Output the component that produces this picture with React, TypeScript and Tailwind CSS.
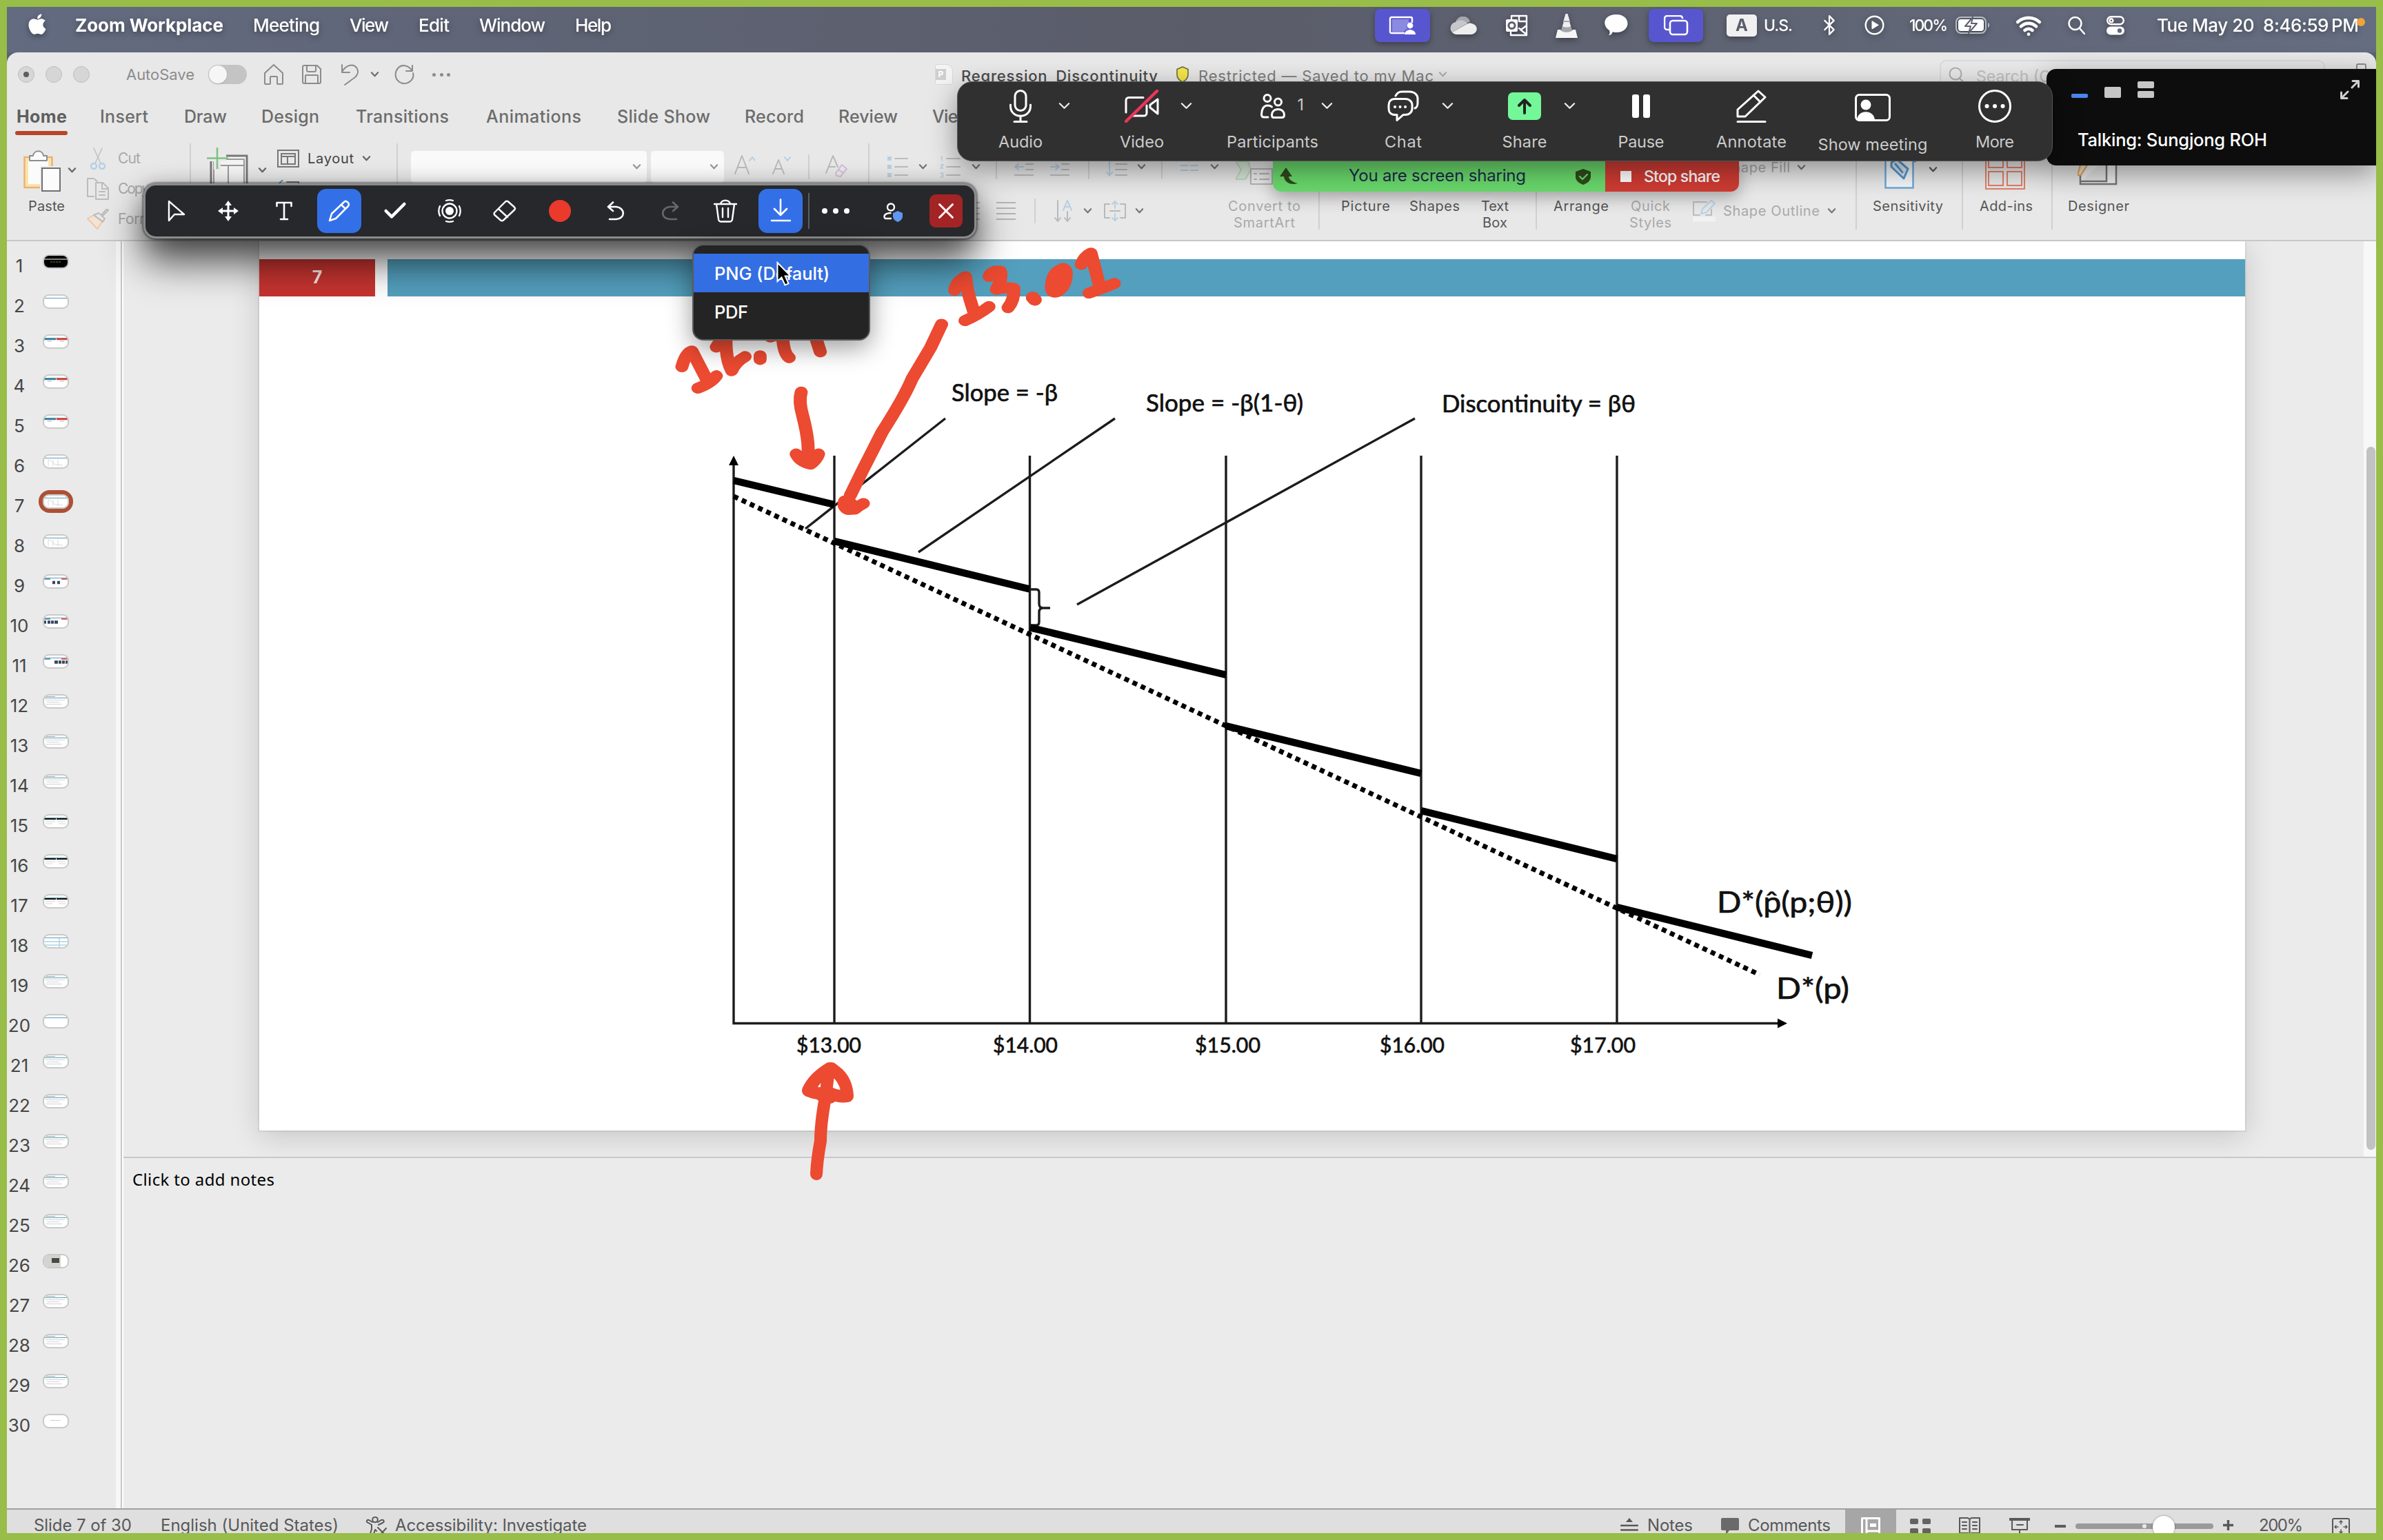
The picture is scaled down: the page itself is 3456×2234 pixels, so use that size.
import { useLayoutEffect, useRef, useState } from "react";
import type { ReactNode } from "react";
import { Bluetooth, Check, Scissors, Wifi, X } from "lucide-react";
import { FaApple } from "react-icons/fa";

/* Text whose tracking is tuned so that it fills its own box exactly. */
function Fit({ className = "", children }: { className?: string; children: string }) {
  const box = useRef<HTMLSpanElement>(null);
  const inner = useRef<HTMLSpanElement>(null);
  const [tracking, setTracking] = useState(0);
  useLayoutEffect(() => {
    if (!box.current || !inner.current) return;
    const natural = inner.current.getBoundingClientRect().width;
    setTracking((box.current.clientWidth - natural) / Math.max(1, children.length - 1));
  }, [children]);
  return (
    <span ref={box} className={`block shrink-0 whitespace-nowrap ${className}`}>
      <span ref={inner} style={{ letterSpacing: tracking }}>{children}</span>
    </span>
  );
}

function Ico({ vb, className = "", sw = 2, children }: { vb: string; className?: string; sw?: number; children: ReactNode }) {
  return (
    <svg viewBox={vb} className={`block shrink-0 ${className}`} fill="none" stroke="currentColor" strokeWidth={sw} strokeLinecap="round" strokeLinejoin="round">
      {children}
    </svg>
  );
}

function Chev({ className = "" }: { className?: string }) {
  return (
    <Ico vb="0 0 14 10" className={`h-[10px] w-[13px] ${className}`} sw={2.4}>
      <path d="M2 2l5 5.5L12 2" />
    </Ico>
  );
}

const Sep = ({ className = "" }: { className?: string }) => <div className={`w-[2px] shrink-0 bg-[#d0d0d0] ${className}`} />;

function MenuBar() {
  return (
    <div className="flex h-[66px] shrink-0 items-start bg-linear-to-r from-[#636b80] via-[#5a5c69] to-[#656d80] text-white">
      <div className="flex h-[53px] items-center text-[26px] leading-[34px] [filter:drop-shadow(0_3px_4px_rgba(0,0,0,0.35))]">
        <FaApple className="-mt-[4px] ml-[31px] h-[34px] w-[26px] shrink-0" />
        <Fit className="ml-[42px] w-[215px] font-bold">Zoom Workplace</Fit>
        <Fit className="ml-[43px] w-[97px] font-medium">Meeting</Fit>
        <Fit className="ml-[43px] w-[57px] font-medium">View</Fit>
        <Fit className="ml-[43px] w-[45px] font-medium">Edit</Fit>
        <Fit className="ml-[43px] w-[96px] font-medium">Window</Fit>
        <Fit className="ml-[43px] w-[53px] font-medium">Help</Fit>
        <div className="ml-[1107px] flex h-[48px] w-[80px] shrink-0 items-center justify-center rounded-[8px] bg-[#5856cf]">
          <Ico vb="0 0 40 28" className="h-[28px] w-[40px]" sw={2.4}>
            <path d="M22 25H4a2 2 0 0 1-2-2V4a2 2 0 0 1 2-2h28a2 2 0 0 1 2 2v5" />
            <path d="M5 5h24v5c-4 2-4 7-1 9-4 1-6 3-6 5H5z" fill="#8b8ae0" stroke="none" />
            <circle cx="31" cy="14" r="4.4" fill="white" stroke="none" />
            <path d="M23 27c0-9 16-9 16 0z" fill="white" stroke="none" />
          </Ico>
        </div>
        <Ico vb="0 0 40 26" className="ml-[28px] h-[26px] w-[40px]" sw={0}>
          <path d="M9 8a11 11 0 0 1 21-1l-10 6z" fill="#a5a7ae" />
          <path d="M9 8a9 9 0 0 0-5 15l22-13a12 12 0 0 0-17-2z" fill="#c6c7cb" />
          <path d="M4 23c2 2 4 3 7 3h20c11-1 12-14 1-16-3-1-5 0-7 1z" fill="#eeeeef" />
        </Ico>
        <Ico vb="0 0 33 32" className="ml-[41px] h-[32px] w-[33px]" sw={2.4}>
          <path d="M9 6V2h22v28H8v-4M20 2v8M20 10h11M20 20l3 2 8-6M31 29L22 22" />
          <rect x="1" y="7" width="17" height="18" rx="2" fill="white" stroke="none" />
          <circle cx="9.500" cy="16" r="4.600" stroke="#5b5d6b" strokeWidth="3" />
        </Ico>
        <Ico vb="0 0 32 36" className="ml-[40px] h-[36px] w-[32px]" sw={0}>
          <path d="M14.500 1h3l3.500 12H11z" fill="#eee" />
          <path d="M12 11h8l2 7H10z" fill="#a4a6ad" />
          <path d="M10 18h12l2 7c-3 4-13 4-16 0z" fill="#a4a6ad" />
          <path d="M12 13h8l2 6c-3 2-9 2-12 0z" fill="#eee" />
          <path d="M3 24h4c3 5 15 5 18 0h4l3 12H0z" fill="#f5f5f5" />
        </Ico>
        <Ico vb="0 0 34 31" className="ml-[39px] h-[31px] w-[34px]" sw={0}>
          <path d="M17 0c22 0 22 26 0 26-2 0-4 0-5-1-1 3-3 5-6 5 2-2 2-4 1-7C-4 16-2 0 17 0z" fill="white" />
        </Ico>
        <div className="ml-[30px] flex h-[48px] w-[79px] shrink-0 items-center justify-center rounded-[8px] bg-[#5856cf]">
          <Ico vb="0 0 36 30" className="h-[30px] w-[36px]" sw={2.6}>
            <path d="M8 21H5a4 4 0 0 1-4-4V5a4 4 0 0 1 4-4h18a4 4 0 0 1 4 3" />
            <rect x="9" y="8" width="25" height="20" rx="4" />
          </Ico>
        </div>
        <div className="ml-[34px] flex h-[32px] w-[44px] shrink-0 items-center justify-center rounded-[5px] bg-[#f0f0f0] text-[24px] font-bold text-[#5b5d6b]">A</div>
        <Fit className="ml-[10px] w-[42px] text-[23px] font-medium">U.S.</Fit>
        <Bluetooth className="-mr-[7px] ml-[37px] h-[33px] w-[32px] shrink-0" strokeWidth={1.7} />
        <Ico vb="0 0 29 29" className="ml-[42px] h-[29px] w-[29px]" sw={2.4}>
          <circle cx="14.500" cy="14.500" r="12.800" />
          <path d="M11 9v11l9-5.500z" fill="white" strokeWidth="1" />
        </Ico>
        <Fit className="ml-[36px] w-[56px] text-[23px] font-medium">100%</Fit>
        <Ico vb="0 0 50 25" className="ml-[11px] h-[25px] w-[50px]" sw={2}>
          <rect x="1" y="1" width="43" height="23" rx="7" stroke="#b9bbc2" />
          <rect x="4" y="4" width="37" height="17" rx="4" fill="white" stroke="none" />
          <path d="M47 9c3 1 3 6 0 7z" fill="#b9bbc2" stroke="none" />
          <path d="M25 1L14 14h8l-3 10 12-14h-8z" fill="white" stroke="#5e6070" strokeWidth="2" />
        </Ico>
        <Wifi className="-mr-[3px] ml-[36px] h-[38px] w-[40px] shrink-0" strokeWidth={2.9} />
        <Ico vb="0 0 25 27" className="ml-[40px] h-[27px] w-[25px]" sw={2.6}>
          <circle cx="10.500" cy="11" r="9" />
          <path d="M17 18l7 8" />
        </Ico>
        <Ico vb="0 0 26 28" className="ml-[31px] h-[28px] w-[26px]" sw={2.4}>
          <rect x="1.200" y="1.200" width="23.600" height="11" rx="5.500" />
          <circle cx="7" cy="6.700" r="2.400" />
          <rect x="0" y="15.500" width="26" height="12" rx="6" fill="white" stroke="none" />
          <circle cx="19" cy="21.500" r="3.200" fill="#636a7c" stroke="none" />
        </Ico>
        <Fit className="ml-[47px] w-[293px] font-medium">{"Tue May 20 \u00a08:46:59\u2009PM"}</Fit>
      </div>
    </div>
  );
}

function TitleBar() {
  return (
    <div className="flex h-[64px] shrink-0 items-center text-[22px] leading-[30px] text-[#8c8c8c]">
      <div className="ml-[16px] flex gap-[16px]">
        <div className="flex size-[24px] items-center justify-center rounded-full border border-[#bdbdbd] bg-[#d6d6d6]"><div className="size-[8px] rounded-full bg-[#5c5c5c]" /></div>
        <div className="size-[24px] rounded-full border border-[#bdbdbd] bg-[#d6d6d6]" />
        <div className="size-[24px] rounded-full border border-[#bdbdbd] bg-[#d6d6d6]" />
      </div>
      <Fit className="ml-[53px] w-[99px]">AutoSave</Fit>
      <div className="ml-[20px] h-[28px] w-[56px] shrink-0 rounded-full bg-[#c4c4c4] p-px"><div className="size-[26px] rounded-full bg-[#f6f6f6] shadow" /></div>
      <Ico vb="0 0 30 30" className="ml-[24px] h-[30px] w-[30px]"><path d="M2 13L15 1l13 12v15a1 1 0 0 1-1 1h-6a1 1 0 0 1-1-1v-9a1 1 0 0 0-1-1h-8a1 1 0 0 0-1 1v9a1 1 0 0 1-1 1H3a1 1 0 0 1-1-1z" /></Ico>
      <Ico vb="0 0 30 30" className="ml-[25px] h-[30px] w-[30px]"><path d="M4 2h19l5 5v19a2 2 0 0 1-2 2H4a2 2 0 0 1-2-2V4a2 2 0 0 1 2-2zM8 2v7a2 2 0 0 0 2 2h9a2 2 0 0 0 2-2V2M6 28V17a1 1 0 0 1 1-1h16a1 1 0 0 1 1 1v11" /></Ico>
      <Ico vb="0 0 27 32" className="ml-[27px] h-[32px] w-[27px]"><path d="M2 2v11h11M2 12C8 2 18 0 23 6c4 6 2 10-2 14L6 31" /></Ico>
      <Chev className="ml-[16px] mr-px text-[#6e6e6e]" />
      <Ico vb="0 0 29 30" className="ml-[21px] h-[30px] w-[29px]"><path d="M26 2v8h-9M25 9C20 1 10 0 5 6c-5 6-4 14 0 18 6 6 14 5 19 0 3-3 4-7 3-11" /></Ico>
      <div className="ml-[26px] flex w-[26px] justify-between"><i className="size-[5px] rounded-full bg-[#8c8c8c]" /><i className="size-[5px] rounded-full bg-[#8c8c8c]" /><i className="size-[5px] rounded-full bg-[#8c8c8c]" /></div>
      <div className="ml-[703px] flex h-[30px] w-[26px] shrink-0 items-center rounded-[3px] rounded-tr-[10px] border border-[#d8d8d8] bg-[#f4f4f4]"><span className="flex h-[16px] w-[15px] items-center justify-center bg-[#cfcfcf] text-[12px] font-bold text-white">P</span></div>
      <Fit className="mt-[4px] ml-[12px] w-[285px] font-medium text-[#4b4b4b]">Regression_Discontinuity</Fit>
      <Ico vb="0 0 20 24" className="ml-[26px] h-[24px] w-[20px]" sw={1.6}><path d="M10 1l8 3.500V12c0 6-4 9-8 11-4-2-8-5-8-11V4.500z" fill="#f5e84c" stroke="#6d6a45" /></Ico>
      <Fit className="mt-[3px] ml-[13px] w-[341px] text-[#7d7d7d]">Restricted — Saved to my Mac</Fit>
      <Chev className="ml-[7px] mr-px text-[#b0b0b0]" />
      <div className="mt-[11px] ml-[713px] flex h-[44px] w-[559px] shrink-0 items-start self-start rounded-[10px] border-2 border-[#dadada] pt-[7px] text-[#c0c0c0]">
        <Ico vb="0 0 24 24" className="mt-px ml-[11px] h-[24px] w-[24px] text-[#adadad]"><circle cx="10" cy="10" r="8.500" /><path d="M16 17l7 6" /></Ico>
        <span className="ml-[16px] text-[23px] leading-[30px]">Search (Cmd + Ctrl + U)</span>
      </div>
      <Ico vb="0 0 30 26" className="-mt-[6px] ml-[36px] h-[26px] w-[30px]"><path d="M10 14V3a2 2 0 0 1 2-2h9a2 2 0 0 1 2 2v12M1 10h6" /></Ico>
    </div>
  );
}

function TabRow() {
  return (
    <div className="flex h-[68px] shrink-0 items-start">
      <div className="flex h-[58px] items-center text-[25px] leading-[34px] font-medium text-[#6c6c6c]">
        <div className="relative ml-[14px] font-bold text-[#5e5e5e]">
          <Fit className="w-[73px]">Home</Fit>
          <div className="absolute top-[38px] -left-[2px] h-[6px] w-[76px] rounded-full bg-[#b7472a]" />
        </div>
        <Fit className="ml-[48px] w-[70px]">Insert</Fit>
        <Fit className="ml-[52px] w-[62px]">Draw</Fit>
        <Fit className="ml-[50px] w-[84px]">Design</Fit>
        <Fit className="ml-[53px] w-[135px]">Transitions</Fit>
        <Fit className="ml-[54px] w-[138px]">Animations</Fit>
        <Fit className="ml-[52px] w-[135px]">Slide Show</Fit>
        <Fit className="ml-[50px] w-[86px]">Record</Fit>
        <Fit className="ml-[50px] w-[86px]">Review</Fit>
        <Fit className="ml-[50px] w-[57px]">View</Fit>
      </div>
    </div>
  );
}

const Lines = ({ className = "" }: { className?: string }) => (
  <Ico vb="0 0 28 26" className={`h-[26px] w-[28px] text-[#b4b4b4] ${className}`} sw={2}><path d="M0 1h28M0 9h28M0 17h28M0 25h28" /></Ico>
);

function Ribbon() {
  return (
    <div className="flex h-[142px] shrink-0 items-start border-b-2 border-[#c8c8c8] text-[20px] leading-[24px] text-[#a8a8a8]">
      <div className="mt-[10px] ml-[24px] w-[54px] shrink-0">
        <Ico vb="0 0 54 60" className="h-[60px] w-[54px]" sw={2}>
          <rect x="1.500" y="10" width="40" height="44" fill="#fae3ae" stroke="#eab274" strokeWidth="2.500" strokeLinejoin="miter" />
          <rect x="7" y="14" width="29" height="35" fill="#fbfbfb" stroke="none" />
          <path d="M9 15V8h5c1-9 14-9 15 0h5v7z" fill="#fbfbfb" stroke="#8d8d8d" />
          <rect x="24" y="23" width="30" height="37" fill="#ececec" stroke="none" />
          <rect x="27" y="26" width="26" height="33" fill="#fcfcfc" stroke="#707070" strokeLinejoin="miter" />
        </Ico>
        <Fit className="mt-[9px] ml-[7px] w-[53px] text-[#555]">Paste</Fit>
      </div>
      <Chev className="mt-[34px] ml-[10px] text-[#666]" />
      <div className="ml-[15px] w-[80px] shrink-0 text-[21px]">
        <div className="flex h-[44px] items-center">
          <Ico vb="0 0 32 32" className="h-[32px] w-[32px] text-[#c3c3c3]" sw={1.6}>
            <path d="M10 1l10 22M22 1L12 23" />
            <ellipse cx="10" cy="27" rx="4" ry="4" stroke="#b4cfe6" strokeWidth="2.400" /><ellipse cx="22" cy="27" rx="4" ry="4" stroke="#b4cfe6" strokeWidth="2.400" />
          </Ico>
          <Fit className="ml-[13px] w-[33px]">Cut</Fit>
        </div>
        <div className="flex h-[44px] items-center"><Ico vb="0 0 32 32" className="h-[32px] w-[32px] text-[#bcbcbc]"><path d="M10 27H1V1h9l5 4M13 7h10l8 8v16H13zM22 7v9h9M18 20h8M18 25h8" /></Ico><Fit className="ml-[13px] w-[46px]">Copy</Fit></div>
        <div className="flex h-[44px] items-center"><Ico vb="0 0 32 30" className="h-[30px] w-[32px] text-[#bcbcbc]"><path d="M1 14l14 15 8-11L10 9z" fill="#f3e3d4" stroke="#ecc9a8" /><path d="M10 9l13 10 3-5-4-3 9-9-2-2-8 9-4-3z" /></Ico><Fit className="ml-[13px] w-[67px]">Format</Fit></div>
      </div>
      <Sep className="ml-[69px] h-[125px]" />
      <Ico vb="0 0 60 66" className="mt-[6px] ml-[23px] h-[66px] w-[60px]" sw={2}>
        <rect x="6" y="12" width="52" height="50" fill="#f4f4f4" stroke="#777" strokeWidth="3" strokeLinejoin="miter" />
        <path d="M10 17h44v41H10zM10 26h44M31 26v32" stroke="#999" />
        <path d="M0 8h28v12H20v12H10V20H0z" fill="#eaeaea" stroke="none" />
        <path d="M15 0v31M0 15.500h31" stroke="#7dc383" strokeWidth="2.500" strokeLinecap="butt" />
      </Ico>
      <Chev className="mt-[34px] ml-[14px] text-[#666]" />
      <div className="ml-[15px] w-[137px] shrink-0 text-[#444]">
        <div className="flex h-[44px] items-center">
          <Ico vb="0 0 32 26" className="h-[26px] w-[32px] text-[#777]"><path d="M1 1h30v24H1zM6 6h20v15H6zM6 10h20M15 10v11" strokeLinejoin="miter" /></Ico>
          <Fit className="ml-[12px] w-[67px]">Layout</Fit>
          <Chev className="ml-[12px] mr-px text-[#666]" />
        </div>
        <div className="flex h-[44px] items-center">
          <Ico vb="0 0 32 26" className="h-[26px] w-[32px] text-[#777]"><path d="M14 3h17v22H5V14" strokeLinejoin="miter" /><path d="M8 0L2 6l6 5M3 6h10" stroke="#5b9bd0" /></Ico>
          <span className="ml-[12px]">Reset</span>
        </div>
      </div>
      <Sep className="ml-[36px] h-[125px]" />
      <div className="mt-[11px] ml-[19px] flex h-[46px] w-[342px] shrink-0 items-center justify-end rounded-[5px] bg-[#fafafa] pr-[8px]"><Chev className="text-[#999]" /></div>
      <div className="mt-[11px] ml-[6px] flex h-[46px] w-[106px] shrink-0 items-center justify-end rounded-[5px] bg-[#fafafa] pr-[8px]"><Chev className="text-[#999]" /></div>
      <Ico vb="0 0 30 28" className="mt-[17px] ml-[15px] h-[28px] w-[30px] text-[#b9b9b9]"><path d="M1 27L11 1l10 26M5 18h12" /><path d="M22 8l4-5 4 5" stroke="#b3cde0" /></Ico>
      <Ico vb="0 0 27 28" className="mt-[17px] ml-[25px] h-[28px] w-[27px] text-[#b9b9b9]"><path d="M1 27L9 7l8 20M4 20h10" /><path d="M18 3l4 5 4-5" stroke="#b3cde0" /></Ico>
      <Sep className="mt-[16px] ml-[25px] h-[36px]" />
      <Ico vb="0 0 32 32" className="mt-[17px] ml-[23px] h-[32px] w-[32px] text-[#b9b9b9]"><path d="M1 26L11 1l7 16M5 17h9" /><path d="M15 26l9-12 7 6-9 11-6-1zM19 21l7 5" stroke="#d5bcd8" /></Ico>
      <Sep className="ml-[30px] h-[125px]" />
      <div className="ml-[26px] w-[481px] shrink-0">
        <div className="flex h-[68px] items-center">
          <Ico vb="0 0 30 30" className="h-[30px] w-[30px]"><path d="M0 3h6M0 15h6M0 27h6" stroke="#b8cfe2" strokeWidth="6" strokeLinecap="butt" /><path d="M11 3h19M11 15h19M11 27h19" stroke="#bdbdbd" /></Ico>
          <Chev className="ml-[15px] text-[#777]" />
          <Ico vb="0 0 30 32" className="ml-[18px] h-[32px] w-[30px]"><path d="M2 2l1-1v6M1 13h4l-4 5h4M1 25h4l-2 2 2 2-1 2H1" stroke="#b8cfe2" strokeWidth="1.500" /><path d="M10 4h20M10 16h20M10 28h20" stroke="#bdbdbd" /></Ico>
          <Chev className="ml-[16px] text-[#777]" />
          <Sep className="ml-[22px] h-[36px]" />
          <Ico vb="0 0 28 28" className="ml-[25px] h-[28px] w-[28px]"><path d="M2 14h11M6 10l-5 4 5 4" stroke="#b8cfe2" /><path d="M0 2h28M17 10h11M17 18h11M0 26h28" stroke="#bdbdbd" /></Ico>
          <Ico vb="0 0 28 28" className="ml-[24px] h-[28px] w-[28px]"><path d="M1 14h11M8 10l5 4-5 4" stroke="#b8cfe2" /><path d="M0 2h28M17 10h11M17 18h11M0 26h28" stroke="#bdbdbd" /></Ico>
          <Sep className="ml-[27px] h-[36px]" />
          <Ico vb="0 0 31 28" className="ml-[24px] h-[28px] w-[31px]"><path d="M5 0v26M1 22l4 5 4-5" stroke="#b8cfe2" /><path d="M14 2h17M14 10h17M14 18h17M14 26h17" stroke="#bdbdbd" /></Ico>
          <Chev className="ml-[14px] text-[#777]" />
          <Sep className="ml-[22px] h-[36px]" />
          <Ico vb="0 0 26 28" className="ml-[26px] h-[28px] w-[26px] text-[#b8cfe2]"><path d="M0 5h11M15 5h11M0 12h11M15 12h11M0 19h11M15 19h11" /></Ico>
          <Chev className="ml-[17px] text-[#777]" />
        </div>
        <div className="flex h-[60px] items-center">
          <Lines className="ml-[106px]" />
          <Lines className="ml-[24px]" />
          <Sep className="ml-[27px] h-[36px]" />
          <Ico vb="0 0 26 32" className="ml-[27px] h-[32px] w-[26px]"><path d="M5 1v29M1 26l4 5 4-5M19 17v13M15 26l4 5 4-5" stroke="#b9b9b9" /><path d="M13 15l6-14 6 14M15 10h8" stroke="#b8cfe2" /></Ico>
          <Chev className="ml-[16px] text-[#777]" />
          <Ico vb="0 0 32 30" className="ml-[17px] h-[30px] w-[32px]"><path d="M8 5H1v20h7M24 5h7v20h-7M9 15h14" stroke="#b9b9b9" /><path d="M16 1v10M12 5l4-4 4 4M16 19v10M12 25l4 4 4-4" stroke="#b8cfe2" /></Ico>
          <Chev className="ml-[13px] text-[#777]" />
        </div>
      </div>
      <div className="mt-[26px] ml-[13px] w-[105px] shrink-0">
        <Ico vb="0 0 54 34" className="ml-[11px] h-[34px] w-[54px]"><path d="M0 0h18l4 12-8 14H0l8-14z" stroke="#bcd8bd" fill="#d8e8d8" /><path d="M22 11h31v22H22zM27 18h3M35 18h13M27 26h3M35 26h13" stroke="#b4b4b4" fill="#ededed" /></Ico>
        <Fit className="mt-[19px] w-[105px]">Convert to</Fit>
        <Fit className="ml-[8px] w-[89px]">SmartArt</Fit>
      </div>
      <Sep className="ml-[26px] h-[125px]" />
      <Fit className="mt-[79px] ml-[31px] w-[71px] text-[#555]">Picture</Fit>
      <Fit className="mt-[79px] ml-[28px] w-[73px] text-[#555]">Shapes</Fit>
      <div className="mt-[79px] ml-[31px] w-[42px] shrink-0 text-[#555]"><Fit className="w-[40px]">Text</Fit><Fit className="ml-[2px] w-[36px]">Box</Fit></div>
      <Sep className="ml-[37px] h-[125px]" />
      <Fit className="mt-[79px] ml-[24px] w-[80px] text-[#555]">Arrange</Fit>
      <div className="mt-[79px] ml-[30px] w-[61px] shrink-0"><Fit className="ml-[2px] w-[57px]">Quick</Fit><Fit className="w-[61px]">Styles</Fit></div>
      <div className="ml-[31px] w-[209px] shrink-0">
        <div className="flex h-[70px] items-center"><Fit className="ml-[44px] w-[97px]">Shape Fill</Fit><Chev className="ml-[10px] text-[#777]" /></div>
        <div className="flex h-[56px] items-center">
          <Ico vb="0 0 33 32" className="h-[32px] w-[33px]"><path d="M20 3H1v19h9M27 14v8h-8" stroke="#bdbdbd" /><path d="M12 20l2-7L27 1l5 4-12 13z" stroke="#b8d3e8" /><path d="M0 28h33" stroke="#f2f2f2" strokeWidth="7" /></Ico>
          <Fit className="ml-[11px] w-[140px]">Shape Outline</Fit><Chev className="ml-[11px] text-[#777]" />
        </div>
      </div>
      <Sep className="ml-[27px] h-[125px]" />
      <div className="mt-[10px] ml-[23px] w-[102px] shrink-0 text-[#555]">
        <div className="flex h-[56px] items-center">
          <Ico vb="0 0 53 56" className="ml-[17px] h-[56px] w-[53px]">
            <path d="M1.500 6h40v48.500h-40z" fill="#f5f8fb" stroke="#6da6d6" strokeWidth="2.500" strokeLinejoin="miter" />
            <path d="M36 6l8 10 7-4-9-12z" fill="#5b97cb" stroke="#5b97cb" strokeWidth="3" />
            <path d="M10 18l8-5 16 14-6 14L10 24zM16 20l10 12" stroke="#5b97cb" strokeWidth="3" fill="#d9e8f4" />
          </Ico>
          <Chev className="ml-[11px]" />
        </div>
        <Fit className="mt-[13px] w-[102px]">Sensitivity</Fit>
      </div>
      <Sep className="ml-[27px] h-[125px]" />
      <div className="mt-[10px] ml-[24px] w-[77px] shrink-0 text-[#555]">
        <Ico vb="0 0 58 57" className="ml-[8px] h-[57px] w-[58px] text-[#e0806a]" sw={2}><path d="M1 1h56v55H1zM5 5h21v20H5zM32 5h21v20H32zM5 31h21v20H5zM32 31h21v20H32z" strokeLinejoin="miter" /></Ico>
        <Fit className="mt-[12px] w-[77px]">Add-ins</Fit>
      </div>
      <Sep className="ml-[27px] h-[125px]" />
      <div className="mt-[10px] ml-[22px] w-[89px] shrink-0 text-[#555]">
        <Ico vb="0 0 58 57" className="ml-[14px] h-[57px] w-[58px] text-[#777]"><path d="M4 10h52v39H4zM6 45h36V10" fill="#f2f2f2" strokeWidth="2.500" strokeLinejoin="miter" /><path d="M0 36l5-18 10 2-10 16z" stroke="#e4a55c" fill="#f7e2c2" /></Ico>
        <Fit className="mt-[12px] w-[89px]">Designer</Fit>
      </div>
    </div>
  );
}

type ThumbKind = "dark" | "plain" | "split" | "curve" | "pics" | "picsLeft" | "picsRight" | "text" | "black" | "table" | "photo" | "end";
const thumbs: ThumbKind[] = ["dark", "plain", "split", "split", "split", "curve", "curve", "curve", "pics", "picsLeft", "picsRight", "text", "text", "text", "black", "black", "black", "table", "text", "plain", "text", "text", "text", "text", "text", "photo", "text", "text", "text", "end"];

function ThumbArt({ kind }: { kind: ThumbKind }) {
  const pics = kind === "pics" || kind === "picsLeft" || kind === "picsRight";
  return (
    <svg viewBox="0 0 34 17" className="block h-[17px] w-[34px]" preserveAspectRatio="none">
      {kind === "dark" && <><rect width="34" height="17" fill="#000" /><path d="M0 5h34" stroke="#fff" /><path d="M9 9h15" stroke="#7a7a2c" strokeWidth="1.200" strokeDasharray="3 1" /></>}
      {kind !== "dark" && kind !== "end" && kind !== "photo" && <path d="M0 3.500h34" stroke="#5d9fb8" strokeWidth="1.200" />}
      {kind === "split" && <><path d="M0 5h17" stroke="#3f7f98" strokeWidth="2.400" /><path d="M18 5h16" stroke="#e2352a" strokeWidth="2.400" /><path d="M5 8h6M23 8h6" stroke="#bbb" /></>}
      {kind === "curve" && <path d="M6 6v9M6 6c6 0 6 8 14 7l7 1M13 6v9M20 6v9" stroke="#cfcfcf" strokeWidth="0.800" fill="none" />}
      {pics && <><path d="M0 5h9" stroke="#3f7f98" strokeWidth="1.600" /><path d="M25 5h9" stroke="#e2352a" strokeWidth="1.600" /></>}
      {kind === "pics" && <path d="M12 10h4M19 10h4" stroke="#3b4560" strokeWidth="4.500" />}
      {kind === "picsLeft" && <path d="M0 9.500h3M5 9.500h4M10 9.500h4M15 9.500h5" stroke="#3b4560" strokeWidth="4.500" />}
      {kind === "picsRight" && <path d="M15 9.500h5M21 9.500h4M26 9.500h4M31 9.500h3" stroke="#3b4560" strokeWidth="4.500" />}
      {kind === "text" && <><path d="M2 6.500h28M4 9.500h18M2 12.500h24" stroke="#d2d4d6" /><path d="M2 1.500h14" stroke="#a5a5a5" /></>}
      {kind === "black" && <><path d="M0 5h17M18 5h16" stroke="#111" strokeWidth="2" /><path d="M2 9h14M19 9h12M2 12h10M21 12h11" stroke="#d5d5d5" /></>}
      {kind === "table" && <><path d="M0 9h34M0 14h34M22 4v13" stroke="#a9d5e4" strokeWidth="1.400" /></>}
      {kind === "photo" && <><rect width="24" height="17" fill="#d3d3cf" /><rect x="11" y="4" width="11" height="7" fill="#4a4a42" /></>}
      {kind === "end" && <path d="M9 7.500h15" stroke="#cdcdcd" />}
    </svg>
  );
}

function Sidebar() {
  return (
    <div className="w-[158px] shrink-0 bg-[#eaeaea] pt-[7px]">
      {thumbs.map((kind, i) => (
        <div key={i} className="flex h-[58px] items-start">
          <span className="w-[36px] text-center text-[26px] leading-[58px] text-[#464646]">{i + 1}</span>
          <div className={i === 6 ? "mt-[12px] ml-[16px] rounded-[10px] ring-[6px] ring-[#ad5035]" : "mt-[12px] ml-[16px] rounded-[10px]"}>
            <div className="h-[21px] w-[38px] overflow-hidden rounded-[9px] border-2 border-[#c9c9c9] bg-white"><ThumbArt kind={kind} /></div>
          </div>
        </div>
      ))}
    </div>
  );
}

const verticals = [1210, 1493.5, 1778, 2061, 2345];
const segments = [[1064, 697, 1210, 732], [1210, 785, 1493, 854.5], [1494, 910.5, 1778, 979], [1778, 1053, 2061, 1122], [2061, 1176, 2345, 1246], [2345, 1316, 2628, 1386]];
const prices: [string, number, number][] = [["$13.00", 1155, 94], ["$14.00", 1440, 94], ["$15.00", 1733, 95], ["$16.00", 2001, 94], ["$17.00", 2277, 95]];

function Chart() {
  return (
    <svg viewBox="376 430 2880 1210" className="block h-[1210px] w-[2880px]" fill="none" stroke="#000">
      <g strokeWidth="3.400" stroke="#1c1c1c">
        <path d="M1064 670V1484.500H2578" />
        {verticals.map((x) => <path key={x} d={`M${x} 661V1484`} />)}
        <path d="M1371 607L1168 767M1617 607L1332 801M2052 607L1562 877" />
        <path d="M1495 855h8q4 0 4 5v16q0 6 6 6h10M1513 882q-6 0-6 6v14q0 5-4 5h-8" />
      </g>
      <path d="M1064 661l7 14h-14zM2592 1484.500l-14 7v-14z" fill="#000" stroke="none" />
      <g strokeWidth="10.500">{segments.map(([a, b, c, d]) => <path key={a} d={`M${a} ${b}L${c} ${d}`} />)}</g>
      <path d="M1064 720L2552 1414" strokeWidth="7" strokeDasharray="7 6.030" />
      <g fill="#111" stroke="#111" strokeWidth="0.700" fontSize="35" className="font-['Lato','Noto_Sans',sans-serif]">
        <text x="1380" y="582" textLength="154" lengthAdjust="spacingAndGlyphs">Slope = -β</text>
        <text x="1662" y="596.500" textLength="228" lengthAdjust="spacingAndGlyphs">Slope = -β(1-θ)</text>
        <text x="2091" y="598" textLength="281" lengthAdjust="spacingAndGlyphs">Discontinuity = βθ</text>
        <g fontSize="42">
          <text x="2490" y="1324" textLength="196" lengthAdjust="spacingAndGlyphs">D*(p̂(p;θ))</text>
          <text x="2576" y="1449" textLength="106" lengthAdjust="spacingAndGlyphs">D*(p)</text>
        </g>
        <g fontSize="31.500">{prices.map(([t, x, w]) => <text key={t} x={x} y="1527" textLength={w} lengthAdjust="spacingAndGlyphs">{t}</text>)}</g>
      </g>
    </svg>
  );
}

function Canvas() {
  return (
    <div className="flex h-[1328px] justify-between overflow-hidden bg-[#ebebeb]">
      <div className="ml-[197px] h-[1290px] w-[2880px] shrink-0 bg-white shadow-[0_8px_40px_rgba(0,0,0,0.16),0_0_0_2px_rgba(0,0,0,0.06)]">
        <div className="flex h-[80px] gap-[18px] pt-[26px]">
          <div className="flex w-[168px] items-center justify-center bg-[#c63430] text-[25px] font-bold text-white/90">7</div>
          <div className="flex-1 bg-[#539fbd]" />
        </div>
        <Chart />
      </div>
      <div className="flex w-[18px] justify-end bg-[#f7f7f7] pt-[298px] pr-[1px]">
        <div className="h-[1020px] w-[13px] rounded-full bg-[#c2c2c2]" />
      </div>
    </div>
  );
}

function StatusBar() {
  return (
    <div className="flex h-[60px] shrink-0 items-start border-t-2 border-[#a0a0a0] bg-[#dfdfdf] text-[#585858]">
      <div className="flex h-[45px] items-center text-[24px] leading-[32px]">
        <Fit className="ml-[39px] w-[142px]">Slide 7 of 30</Fit>
        <Fit className="ml-[42px] w-[258px]">English (United States)</Fit>
        <Ico vb="0 0 31 30" className="mt-[4px] ml-[40px] h-[30px] w-[31px]"><circle cx="13" cy="4.500" r="3.800" /><path d="M9 8L4 5C0 4 0 9 3 9l5 3v6L5 28M17 8l5-3c4-1 5 3 2 4l-6 3M11 25l2-6 2 2M17 16l12 12M29 17L18 29" /></Ico>
        <Fit className="ml-[11px] w-[278px]">Accessibility: Investigate</Fit>
        <Ico vb="0 0 26 28" className="mt-[6px] ml-[1499px] h-[28px] w-[26px]" sw={2.4}><path d="M8 6l5-6 5 6z" fill="currentColor" stroke="none" /><path d="M1 11h24M1 17.500h24M1 24h12" /></Ico>
        <Fit className="ml-[13px] w-[66px]">Notes</Fit>
        <Ico vb="0 0 26 26" className="mt-[5px] ml-[41px] h-[26px] w-[26px]" sw={0}><path d="M2 0h22a2 2 0 0 1 2 2v14a2 2 0 0 1-2 2H12l-5 7v-7H2a2 2 0 0 1-2-2V2a2 2 0 0 1 2-2z" fill="#6a6a6a" /></Ico>
        <Fit className="ml-[13px] w-[120px]">Comments</Fit>
        <div className="ml-[21px] flex h-[45px] w-[74px] shrink-0 items-center justify-center bg-[#a6a6a6]">
          <Ico vb="0 0 28 28" className="mt-[4px] h-[28px] w-[28px] text-white" sw={3}><path d="M1.500 1.500h25v25h-25zM8 2v24M8 20h18" /><rect x="13" y="9" width="9" height="5" fill="white" stroke="none" /></Ico>
        </div>
        <div className="mt-[2px] ml-[20px] grid grid-cols-2 gap-x-[6px] gap-y-[6px]"><i className="h-[8px] w-[12px] rounded-[2px] bg-[#636363]" /><i className="h-[8px] w-[12px] rounded-[2px] bg-[#636363]" /><i className="h-[8px] w-[12px] rounded-[2px] bg-[#636363]" /><i className="h-[8px] w-[12px] rounded-[2px] bg-[#636363]" /></div>
        <Ico vb="0 0 31 26" className="mt-[3px] ml-[41px] h-[26px] w-[31px]" sw={2}><path d="M1 1h12l2.500 2L18 1h12v22H18l-2.500 2-2.500-2H1zM15.500 3v21M5 7h6M5 12h6M5 17h6M20 7h6M20 12h6M20 17h6" /></Ico>
        <Ico vb="0 0 30 28" className="mt-[6px] ml-[42px] h-[28px] w-[30px]" sw={2}><path d="M1 2h28" strokeWidth="4" /><path d="M4 4v13h22V4M11 10h9M15 17v8M10 25h10" /></Ico>
        <div className="mt-[2px] ml-[36px] h-[4px] w-[16px] shrink-0 bg-[#5c5c5c]" />
        <div className="mt-[2px] ml-[14px] flex h-[8px] w-[200px] shrink-0 items-center rounded-full bg-[#9a9a9a]">
          <div className="ml-[97px] size-[6px] rounded-full bg-[#e8e8e8]" />
          <div className="mt-[2px] ml-[9px] size-[32px] shrink-0 rounded-full bg-white shadow-[0_0_3px_rgba(0,0,0,0.4)]" />
        </div>
        <Ico vb="0 0 17 17" className="ml-[13px] h-[17px] w-[17px]" sw={3.4}><path d="M8.500 1v15M1 8.500h15" strokeLinecap="butt" /></Ico>
        <Fit className="ml-[36px] w-[64px]">200%</Fit>
        <Ico vb="0 0 26 26" className="mt-[4px] ml-[42px] h-[26px] w-[26px]" sw={2}><rect x="1" y="1" width="24" height="24" rx="2" /><path d="M13 4v5M11 6l2-2 2 2M13 22v-5M11 20l2 2 2-2M4 13h5M6 11l-2 2 2 2M22 13h-5M20 11l2 2-2 2" strokeWidth="1.500" /></Ico>
      </div>
    </div>
  );
}

function Ctl({ className, label, labelClass = "", children }: { className: string; label: string; labelClass?: string; children: ReactNode }) {
  return (
    <div className={`flex shrink-0 flex-col items-center ${className}`}>
      <div className="relative flex h-[48px] items-center justify-center text-white">{children}</div>
      <Fit className={`mt-[12px] leading-[32px] ${labelClass}`}>{label}</Fit>
    </div>
  );
}

const Drop = ({ className = "" }: { className?: string }) => (
  <Ico vb="0 0 18 11" className={`mt-[18px] h-[11px] w-[17px] text-[#eee] ${className}`} sw={2.4}><path d="M2 2l7 7 7-7" /></Ico>
);

function MeetingToolbar() {
  return (
    <div className="absolute top-[118px] left-[1388px] flex h-[116px] w-[1589px] items-start rounded-[22px] border border-[#555] bg-[#303030] pt-[11px] text-[23.500px] text-[#cbcbcb] shadow-[0_12px_40px_rgba(0,0,0,0.4)]">
      <Ctl className="ml-[59px] w-[64px]" label="Audio" labelClass="w-[64px]">
        <Ico vb="0 0 32 48" className="h-[48px] w-[32px]" sw={3}><rect x="8" y="1.500" width="16" height="29" rx="8" /><path d="M1.500 22v2c0 19 29 19 29 0v-2M16 38v8M7 46.500h18" /></Ico>
      </Ctl>
      <Drop className="ml-[23px]" />
      <Ctl className="ml-[72px] w-[64px]" label="Video" labelClass="w-[64px]">
        <Ico vb="0 0 50 48" className="h-[48px] w-[50px]" sw={3}><path d="M27 11.500H6a4 4 0 0 0-4 4V33M32 23v11a4 4 0 0 1-4 4H12M48 14L37 22v4l11 9z" /><path d="M47 2L2 46" stroke="#f0345a" strokeWidth="4.500" /></Ico>
      </Ctl>
      <Drop className="ml-[24px]" />
      <Ctl className="ml-[50px] w-[133px]" label="Participants" labelClass="w-[133px]">
        <Ico vb="0 0 36 36" className="h-[36px] w-[36px]" sw={3}><circle cx="10" cy="6.500" r="5" /><circle cx="25.500" cy="12" r="5" /><path d="M11 34H5c-2 0-3.500-1-3.500-4 0-7 3-13 9-13 3 0 5 1 6 2M19 34.500h12c3 0 3.500-2 3.500-4 0-4-3-8-9-8s-9 4-9 8c0 2 0 4 2.500 4z" /></Ico>
        <span className="absolute top-[6px] left-[54px] text-[23px] leading-[32px] text-[#cbcbcb]">1</span>
      </Ctl>
      <Drop className="ml-[4px]" />
      <Ctl className="ml-[75px] w-[54px]" label="Chat" labelClass="w-[54px]">
        <Ico vb="0 0 46 46" className="h-[46px] w-[46px]" sw={3}><path d="M12 8c2-4 5-6 9-6h11c8 0 12 5 12 10v6c0 4-1 7-4 8" /><path d="M11 12.500h15c6 0 10 4 10 9v5c0 5-4 9-10 9h-3l-9 8v-8h-3c-6 0-9-4-9-9v-5c0-5 3-9 9-9z" /><path d="M11 24h.1M18.500 24h.1M26 24h.1" strokeWidth="4" /></Ico>
      </Ctl>
      <Drop className="ml-[29px]" />
      <Ctl className="ml-[70px] w-[66px]" label="Share" labelClass="w-[65px]">
        <div className="flex h-[40px] w-[48px] items-center justify-center rounded-[7px] bg-[#74f798]">
          <Ico vb="0 0 24 24" className="h-[24px] w-[24px] text-[#222]" sw={4}><path d="M12 22V4M4 11l8-8 8 8" /></Ico>
        </div>
      </Ctl>
      <Drop className="ml-[24px]" />
      <Ctl className="ml-[61px] w-[68px]" label="Pause" labelClass="w-[67px]">
        <div className="flex gap-[6px]"><i className="h-[34px] w-[10px] rounded-[3px] bg-white" /><i className="h-[34px] w-[10px] rounded-[3px] bg-white" /></div>
      </Ctl>
      <Ctl className="ml-[75px] w-[102px]" label="Annotate" labelClass="w-[102px]">
        <Ico vb="0 0 44 48" className="h-[48px] w-[44px]" sw={3}><path d="M2 39V29L32 2l10 9-29 28zM25 8l10 10M2 46.500h40" /></Ico>
      </Ctl>
      <Ctl className="ml-[45px] w-[160px]" label="Show meeting" labelClass="w-[159px] relative top-[4px]">
        <Ico vb="0 0 52 40" className="mt-[4px] h-[40px] w-[52px]" sw={3}><rect x="1.500" y="1.500" width="49" height="37" rx="5" /><ellipse cx="16" cy="16" rx="7.500" ry="7.500" fill="white" stroke="none" /><path d="M3 39c0-17 26-17 26 0z" fill="white" stroke="none" /></Ico>
      </Ctl>
      <Ctl className="ml-[69px] w-[56px]" label="More" labelClass="w-[56px]">
        <Ico vb="0 0 48 48" className="h-[48px] w-[48px]" sw={3}><circle cx="24" cy="24" r="22.500" /><path d="M12.500 24h.1M24 24h.1M35.500 24h.1" strokeWidth="6" /></Ico>
      </Ctl>
    </div>
  );
}

function ShareBanner() {
  return (
    <div className="absolute top-[232px] left-[1846px] flex h-[46px] w-[676px] overflow-hidden rounded-b-[12px] text-[24px] leading-[32px] shadow-[0_8px_24px_rgba(0,0,0,0.3)]">
      <div className="flex w-[482px] items-center bg-[#69d76b] text-[#1d2a4a]">
        <Ico vb="0 0 26 24" className="ml-[10px] h-[24px] w-[26px]" sw={0}><path d="M9 0l9 13h-5c0 4 5 8 13 10-10 3-19-1-20-10H0z" fill="#2f4a1b" /></Ico>
        <Fit className="-mt-px ml-[74px] w-[257px]">You are screen sharing</Fit>
        <Ico vb="0 0 22 23" className="mt-[2px] ml-[72px] h-[23px] w-[22px]" sw={2.4}><path d="M11 0l11 4v7c0 7-6 10-11 12C6 21 0 18 0 11V4z" fill="#2f4a1b" stroke="none" /><path d="M6 11l4 4 7-7" stroke="#69d76b" /></Ico>
      </div>
      <div className="flex flex-1 items-center bg-[#cd3b33] font-medium text-white">
        <div className="mt-[2px] ml-[22px] h-[16px] w-[16px] bg-white" />
        <Fit className="mt-[2px] ml-[18px] w-[111px] text-[23px]">Stop share</Fit>
      </div>
    </div>
  );
}

function SpeakerPanel() {
  return (
    <div className="absolute top-[100px] left-[2968px] flex h-[140px] w-[478px] flex-col rounded-l-[14px] bg-[#0d0d0d] shadow-[0_12px_40px_rgba(0,0,0,0.4)]">
      <div className="flex h-[48px] items-start">
        <div className="mt-[36px] ml-[36px] h-[6px] w-[24px] rounded-[2px] bg-[#4a86f0]" />
        <div className="mt-[26px] ml-[24px] h-[16px] w-[24px] rounded-[2px] bg-[#c6c6c6]" />
        <div className="mt-[18px] ml-[24px] flex w-[24px] flex-col gap-[4px]"><i className="h-[10px] rounded-[2px] bg-[#c6c6c6]" /><i className="h-[10px] rounded-[2px] bg-[#c6c6c6]" /></div>
        <Ico vb="0 0 28 28" className="mt-[16px] ml-[270px] h-[28px] w-[28px] text-[#cfcfcf]" sw={3}><path d="M17 11l9-9M18 1.500h8.500V10M11 17l-9 9M1.500 18v8.500H10" /></Ico>
      </div>
      <Fit className="mt-[38px] ml-[45px] w-[275px] text-[25.500px] leading-[34px] font-medium text-white">Talking: Sungjong ROH</Fit>
    </div>
  );
}

function Ink() {
  return (
    <svg viewBox="0 0 3456 2234" className="pointer-events-none absolute inset-0 h-[2234px] w-[3456px]" fill="none" stroke="#ec4a31" strokeLinecap="round" strokeLinejoin="round">
      <g transform="translate(940 341) scale(0.4847 0.4082)" strokeWidth="39">
        <path d="M917 196Q922 165 950 148Q952 180 962 225L975 275M948 304Q985 285 1020 254" />
        <path d="M1020 147Q1028 124 1054 129Q1060 155 1042 193Q1070 184 1094 190Q1096 230 1077 258" />
        <path d="M1151 222L1157 230" strokeWidth="42" />
        <path d="M1244 119Q1212 128 1208 170Q1202 208 1222 202Q1250 185 1251 138Q1252 122 1240 119" />
        <path d="M1296 104Q1305 76 1325 64L1352 186M1319 206Q1360 190 1395 172" />
        <path d="M878 317Q865 350 845 400L790 510Q765 580 700 700L640 840L605 925M588 945Q582 965 597 975L618 974Q630 962 644 954M600 945L612 960" />
        <path d="M101 468Q112 418 131 412L175 513M149 544Q190 525 204 500" />
        <path d="M204 398Q212 378 233 372Q232 440 250 482Q262 450 290 432" />
        <path d="M335 429L335 442" />
        <path d="M365 362Q395 350 403 372Q406 420 422 436M503 370L515 415" />
        <path d="M458 558Q450 590 462 640Q475 700 478 740L480 790M443 778Q455 806 486 814Q503 800 510 778M465 795L495 795M465 785L495 785" />
      </g>
      <path d="M1184 1703Q1185 1682 1190 1655Q1190 1630 1197 1592L1201 1560M1203 1550Q1180 1564 1172 1582Q1186 1588 1204 1586Q1218 1592 1229 1590Q1228 1570 1216 1558L1206 1550M1190 1588L1204 1592" strokeWidth="18" />
    </svg>
  );
}

function AnnotationToolbar() {
  return (
    <div className="absolute top-[266px] left-[208px] flex h-[80px] w-[1208px] items-center rounded-[18px] border-[3px] border-[#8b8b8b] bg-[#26282c] text-white shadow-[0_0_2px_2px_rgba(0,0,0,0.35),0_34px_56px_rgba(0,0,0,0.68),0_4px_30px_rgba(0,0,0,0.25)]">
      <Ico vb="0 0 26 32" className="ml-[32px] h-[32px] w-[26px]" sw={2.4}><path d="M2 2v28l8-9h14z" /></Ico>
      <Ico vb="0 0 30 30" className="ml-[47px] h-[30px] w-[30px]" sw={3}><path d="M15 4v22M4 15h22" /><path d="M15 0l5 7H10zM15 30l5-7H10zM0 15l7-5v10zM30 15l-7-5v10z" fill="white" stroke="none" /></Ico>
      <Ico vb="0 0 24 28" className="ml-[54px] h-[28px] w-[24px]" sw={2.6}><path d="M1.500 7V2h21v5M12 2v24M7 26h10" /></Ico>
      <div className="ml-[36px] flex h-[64px] w-[64px] shrink-0 items-center justify-center rounded-[13px] bg-[#3370e8]">
        <Ico vb="0 0 32 32" className="h-[32px] w-[32px]" sw={2.5}><path d="M2 30l3-10L23 3c3-3 9 2 6 6L11 27zM19 7l6 6" /></Ico>
      </div>
      <Check className="ml-[29px] h-[44px] w-[40px] shrink-0" strokeWidth={2.7} />
      <Ico vb="0 0 34 34" className="ml-[42px] h-[34px] w-[34px]" sw={2.3}><circle cx="17" cy="17" r="6" fill="white" stroke="none" /><circle cx="17" cy="17" r="10.500" /><path d="M12 2a16 16 0 0 1 10 0M12 32a16 16 0 0 0 10 0M3 10a16 16 0 0 0 0 14M31 10a16 16 0 0 1 0 14" /></Ico>
      <Ico vb="0 0 34 32" className="ml-[46px] h-[32px] w-[34px]" sw={2.4}><path d="M2.500 18L18 2.500q2-1.500 4 0l9 8q2 2 0 4L15 29.500q-2 1.500-4 0l-9-8q-1-2 .5-3.500zM8 13l13 12" /></Ico>
      <div className="ml-[47px] size-[32px] shrink-0 rounded-full bg-[#ea3a2c]" />
      <Ico vb="0 0 26 28" className="ml-[52px] h-[28px] w-[26px]" sw={2.6}><path d="M9 1.500L2 8l7 6M2 8h12c13 2 13 17 0 18H4" /></Ico>
      <Ico vb="0 0 26 28" className="ml-[53px] h-[28px] w-[26px] text-[#66686c]" sw={2.6}><path d="M17 1.500L24 8l-7 6M24 8H12c-13 2-13 17 0 18h10" /></Ico>
      <Ico vb="0 0 36 34" className="ml-[49px] h-[34px] w-[36px]" sw={2.4}><path d="M2 7h32M11 7c1-7 13-7 14 0M5 7l3 22c0 2 2 3.500 4 3.500h12c2 0 4-1.500 4-3.500l3-22M14 13v13M22 13v13" /></Ico>
      <div className="ml-[30px] flex h-[64px] w-[64px] shrink-0 items-center justify-center rounded-[13px] bg-[#3370e8]">
        <Ico vb="0 0 30 34" className="-mt-[3px] h-[34px] w-[30px]" sw={2.6}><path d="M15 1.500V23M6 15l9 9 9-9M2 32h27" /></Ico>
      </div>
      <div className="ml-[8px] h-[52px] w-[2px] shrink-0 bg-[#5c5e62]" />
      <div className="ml-[18px] flex w-[40px] shrink-0 justify-between"><i className="size-[8px] rounded-full bg-white" /><i className="size-[8px] rounded-full bg-white" /><i className="size-[8px] rounded-full bg-white" /></div>
      <Ico vb="0 0 28 28" className="mt-[3px] ml-[49px] h-[28px] w-[28px]" sw={2.4}><circle cx="11" cy="6.500" r="5" /><path d="M11 23H4c-2 0-2.500-1-2.500-3 0-3 4-5 9-5" /><path d="M21 12l7 3v5c0 4-4 7-7 8-3-1-7-4-7-8v-5z" fill="#5f97f2" stroke="none" /></Ico>
      <div className="ml-[39px] flex h-[48px] w-[48px] shrink-0 items-center justify-center rounded-[9px] bg-[#a32424]"><X className="h-[38px] w-[38px]" strokeWidth={1.8} /></div>
    </div>
  );
}

function SaveMenu() {
  return (
    <div className="absolute top-[354px] left-[1004px] h-[140px] w-[258px] rounded-[16px] border-2 border-[#5a5a5a] bg-[#242424] pt-[12px] text-[25.500px] leading-[34px] font-medium text-white shadow-[0_10px_36px_rgba(0,0,0,0.4)]">
      <div className="flex h-[56px] items-center bg-[#336ee2] pt-[2px]"><Fit className="ml-[30px] w-[167px]">PNG (Default)</Fit></div>
      <div className="flex h-[56px] items-center pt-[2px]"><Fit className="ml-[30px] w-[49px]">PDF</Fit></div>
      <svg viewBox="0 0 22 36" className="absolute top-[23px] left-[120px] h-[37px] w-[22px]"><path d="M1.500 1.500v27l6-5.500 5 11 5-2.200-4.800-10.800h8z" fill="#000" stroke="#fff" strokeWidth="2" /></svg>
    </div>
  );
}

export default function App() {
  return (
    <div className="relative h-[2234px] w-[3456px] overflow-hidden font-['Inter',sans-serif]">
      <div className="flex h-full flex-col bg-[#5d6172] px-[10px] pt-[10px]">
        <MenuBar />
        <div className="flex flex-1 flex-col overflow-hidden rounded-t-[16px] bg-[#e8e8e8]">
          <TitleBar />
          <TabRow />
          <Ribbon />
          <div className="flex h-[1838px] shrink-0">
            <Sidebar />
            <div className="w-[7px] bg-[#f7f7f7]" />
            <div className="w-[2px] bg-[#c8c8c8]" />
            <div className="flex flex-1 flex-col border-l-2 border-white bg-[#ebebeb]">
              <Canvas />
              <div className="flex-1 border-t-2 border-[#c8c8c8] pt-[14px] pl-[13px]">
                <Fit className="w-[206px] font-['Noto_Sans',sans-serif] text-[24px] leading-[34px] text-black">Click to add notes</Fit>
              </div>
            </div>
          </div>
          <StatusBar />
        </div>
      </div>
      <Ink />
      <ShareBanner />
      <SpeakerPanel />
      <MeetingToolbar />
      <AnnotationToolbar />
      <SaveMenu />
      <div className="absolute top-[26px] left-[3418px] size-[12px] rounded-full bg-[#f2a33c]" />
      <div className="pointer-events-none absolute inset-0 border-[10px] border-[#98bd48]" />
    </div>
  );
}
